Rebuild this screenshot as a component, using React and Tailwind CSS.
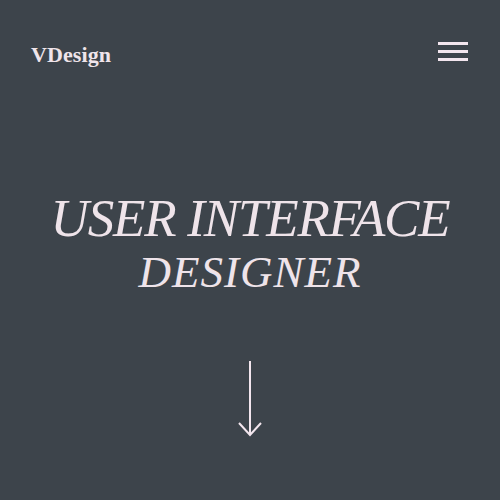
export default function App() {
  return (
    <div className="w-[500px] h-[500px] bg-[#3d444b] text-[#efe4ea] flex flex-col overflow-hidden" style={{ fontFamily: '"Liberation Serif", serif' }}>
      {/* Header */}
      <header className="flex items-start justify-between pl-[31px] pr-[32px] pt-[42px]">
        <span className="mt-[2px] text-[22px] font-bold tracking-[0.1px] leading-none">VDesign</span>
        <button className="flex flex-col gap-[5px]">
          <span className="block w-[30px] h-[3px] bg-[#f3e6ee]" />
          <span className="block w-[30px] h-[3px] bg-[#f3e6ee]" />
          <span className="block w-[30px] h-[3px] bg-[#f3e6ee]" />
        </button>
      </header>

      {/* Hero */}
      <main className="flex flex-col items-center pt-[126px]">
        <h1 className="italic font-normal text-center leading-none">
          <span className="block text-[53px] tracking-[-1.2px]">USER INTERFACE</span>
          <span className="block text-[45px] tracking-[1px] mt-[5px]">DESIGNER</span>
        </h1>
        <svg className="mt-[64px]" width="28" height="80" viewBox="0 0 28 80" fill="none" stroke="#f3e6ee" strokeWidth="2">
          <path d="M14 2 V76" />
          <path d="M3 64 L14 76 L25 64" />
        </svg>
      </main>
    </div>
  );
}
